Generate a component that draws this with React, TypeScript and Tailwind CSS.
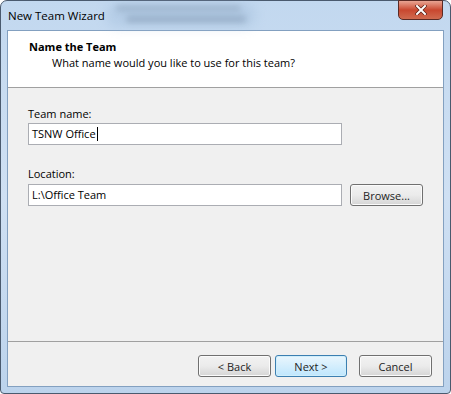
import React from 'react';

const font = { fontFamily: '"Open Sans", "Noto Sans", "Liberation Sans", sans-serif' };

const Button = ({ label, primary }: { label: string; primary?: boolean }) => (
  <button
    className={`h-[22px] rounded-[3px] border text-[11px] text-[#1e1e1e] leading-none ${
      primary
        ? 'w-[72px] border-[#3c7fb1] bg-gradient-to-b from-[#eaf6fd] to-[#bee6fd] shadow-[inset_0_0_0_1px_#d0eefb]'
        : 'w-[73px] border-[#707070] bg-gradient-to-b from-[#f2f2f2] via-[#ebebeb] to-[#d5d5d5] shadow-[inset_0_0_0_1px_#fbfbfb]'
    }`}
  >
    {label}
  </button>
);

const App = () => {
  return (
    <div className="w-[451px] h-[394px] bg-white" style={font}>
      <div className="relative w-[451px] h-[394px] rounded-t-[7px] rounded-b-[4px] border border-[#4a5a6e] bg-gradient-to-b from-[#c2d8ef] via-[#cfe0f3] to-[#bcd3ec] flex flex-col">
        {/* title bar, with the blurred window behind the glass */}
        <div className="h-[29px] flex items-center pl-[7px] relative">
          <span className="text-[11.5px] text-black relative z-10">New Team Wizard</span>
          <div className="absolute left-[115px] top-[5px] w-[125px] h-[5px] rounded-full bg-[#6c7f95] opacity-50 blur-[3px]" />
          <div className="absolute left-[125px] top-[15px] w-[120px] h-[6px] rounded-full bg-[#5d7088] opacity-50 blur-[3px]" />
          <div className="absolute left-[105px] top-[2px] w-[150px] h-[24px] rounded-full bg-[#9fbbd9] opacity-40 blur-[6px]" />
          <button className="absolute right-[7px] top-[-1px] w-[45px] h-[20px] rounded-b-[5px] border border-[#5a2a24] bg-gradient-to-b from-[#e8a493] via-[#c9472f] to-[#d06a4f] flex items-center justify-center">
            <svg width="12" height="10" viewBox="0 0 12 10">
              <path d="M2 1 L10 9 M10 1 L2 9" stroke="#5b1e14" strokeWidth="3.4" strokeLinecap="square" />
              <path d="M2 1 L10 9 M10 1 L2 9" stroke="#ffffff" strokeWidth="2" strokeLinecap="square" />
            </svg>
          </button>
        </div>

        {/* client area */}
        <div className="mx-[6px] mb-[6px] flex-1 border border-[#83a0c0] bg-[#f0f0f0] flex flex-col">
          <div className="h-[57px] bg-white border-b border-[#a0a0a0] pl-[21px] pt-[8px]">
            <div className="text-[11px] font-bold text-black leading-[16px]">Name the Team</div>
            <div className="text-[11px] text-black leading-[16px] pl-[23px]">
              What name would you like to use for this team?
            </div>
          </div>

          <div className="flex-1 pl-[20px] pt-[18px]">
            <div className="text-[11px] text-black leading-[16px]">Team name:</div>
            <div className="mt-[1px] w-[314px] h-[22px] border border-[#abadb3] bg-white flex items-center pl-[3px] text-[11px] text-black">
              TSNW Office<span className="inline-block w-px h-[14px] bg-black ml-px" />
            </div>

            <div className="mt-[21px] text-[11px] text-black leading-[16px]">Location:</div>
            <div className="mt-[2px] flex items-center gap-[8px]">
              <div className="w-[314px] h-[22px] border border-[#abadb3] bg-white flex items-center pl-[3px] text-[11px] text-black">
                L:\Office Team
              </div>
              <Button label="Browse..." />
            </div>
          </div>

          <div className="h-[45px] border-t border-[#a0a0a0] flex items-start justify-end pt-[13px] pr-[11px]">
            <div className="flex gap-[4px]">
              <Button label="< Back" />
              <Button label="Next >" primary />
            </div>
            <div className="ml-[12px] flex">
              <Button label="Cancel" />
            </div>
          </div>
        </div>
      </div>
    </div>
  );
};

export default App;
